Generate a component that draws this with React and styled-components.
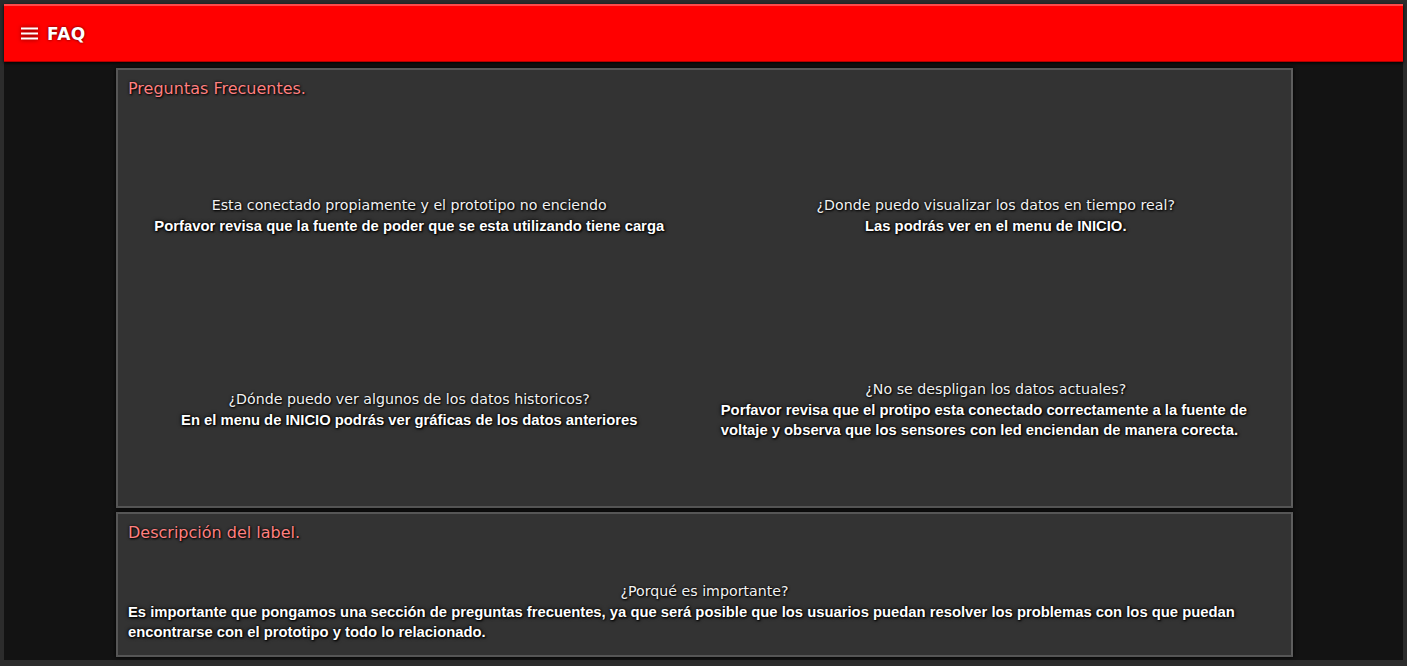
import styled, { createGlobalStyle } from "styled-components";

const GlobalStyle = createGlobalStyle`
  html, body {
    margin: 0;
    padding: 0;
    background: #2c2c2c;
  }
  #root {
    padding: 4px 4px 6px 4px;
    font-family: "Liberation Sans", Arial, sans-serif;
  }
`;

const Frame = styled.div`
  height: 656px;
  display: flex;
  flex-direction: column;
`;

const Header = styled.header`
  height: 58px;
  flex-shrink: 0;
  background: #ff0000;
  border-top: 2px solid #ff4a4a;
  border-bottom: 1px solid #b30000;
  box-sizing: border-box;
  display: flex;
  align-items: center;
  gap: 9px;
  padding: 0 0 0 17px;
  box-shadow: 0 1px 3px #000;
  position: relative;
  z-index: 1;
`;

const MenuIcon = styled.svg`
  width: 17px;
  height: 13px;
  filter: drop-shadow(0 0 2px rgba(0, 0, 0, 0.6));
`;

const HeaderTitle = styled.h1`
  margin: 0;
  color: #fff;
  font-family: "DejaVu Sans", sans-serif;
  font-size: 17px;
  font-weight: bold;
  letter-spacing: 0.5px;
  text-shadow: 0 0 3px rgba(0, 0, 0, 0.7);
`;

const Main = styled.main`
  flex: 1;
  background: #131313;
  display: flex;
  flex-direction: column;
  align-items: center;
  gap: 4px;
  padding: 6px 0 3px 2px;
  box-sizing: border-box;
`;

const Card = styled.section`
  width: 1177px;
  height: ${(p) => p.$h}px;
  box-sizing: border-box;
  background: #333333;
  border: 2px solid #565656;
  border-right-color: #5e5e5e;
  box-shadow: 0 0 4px #000;
  display: flex;
  flex-direction: column;
`;

const CardTitle = styled.h2`
  margin: 0;
  padding: 9px 10px 0;
  height: 48px;
  box-sizing: border-box;
  color: #ff8080;
  font-family: "DejaVu Sans", sans-serif;
  font-size: 16px;
  font-weight: normal;
  text-shadow: 1px 1px 2px #000, 0 0 3px #000;
`;

const Grid = styled.div`
  flex: 1;
  display: grid;
  grid-template-columns: 1fr 1fr;
  grid-template-rows: 195px 1fr;
`;

const Cell = styled.div`
  display: flex;
  flex-direction: column;
  justify-content: center;
  align-items: center;
  padding: 0 12px 0 8px;
  text-align: center;
`;

const Question = styled.p`
  margin: 0;
  color: #f2f2f2;
  font-family: "DejaVu Sans", sans-serif;
  font-size: 14.2px;
  line-height: 21px;
  text-shadow: 1px 1px 2px #000, 0 0 3px #000;
`;

const Answer = styled.p`
  margin: 0;
  max-width: ${(p) => p.$max || "none"};
  color: #fff;
  font-size: 14.8px;
  font-weight: bold;
  line-height: 20px;
  text-align: ${(p) => p.$align || "center"};
  text-shadow: 1px 1px 2px #000, 0 0 4px #000, 0 0 2px #000;
`;

const Description = styled.div`
  padding: 19px 10px 0;
  display: flex;
  flex-direction: column;
  align-items: center;
`;

const faqs = [
  {
    q: "Esta conectado propiamente y el prototipo no enciendo",
    a: "Porfavor revisa que la fuente de poder que se esta utilizando tiene carga",
  },
  {
    q: "¿Donde puedo visualizar los datos en tiempo real?",
    a: "Las podrás ver en el menu de INICIO.",
  },
  {
    q: "¿Dónde puedo ver algunos de los datos historicos?",
    a: "En el menu de INICIO podrás ver gráficas de los datos anteriores",
  },
  {
    q: "¿No se despligan los datos actuales?",
    a: "Porfavor revisa que el protipo esta conectado correctamente a la fuente de voltaje y observa que los sensores con led enciendan de manera corecta.",
  },
];

export default function App() {
  return (
    <>
      <GlobalStyle />
      <Frame>
        <Header>
          <MenuIcon viewBox="0 0 17 13">
            <rect x="0" y="0.5" width="17" height="2" fill="#fff" />
            <rect x="0" y="5.5" width="17" height="2" fill="#fff" />
            <rect x="0" y="10.5" width="17" height="2" fill="#fff" />
          </MenuIcon>
          <HeaderTitle>FAQ</HeaderTitle>
        </Header>
        <Main>
          <Card $h={440}>
            <CardTitle>Preguntas Frecuentes.</CardTitle>
            <Grid>
              {faqs.map((f) => (
                <Cell key={f.q}>
                  <Question>{f.q}</Question>
                  <Answer $align="left" $max="550px">
                    {f.a}
                  </Answer>
                </Cell>
              ))}
            </Grid>
          </Card>
          <Card $h={145}>
            <CardTitle>Descripción del label.</CardTitle>
            <Description>
              <Question>¿Porqué es importante?</Question>
              <Answer $align="left">
                Es importante que pongamos una sección de preguntas frecuentes, ya que será posible que los usuarios puedan resolver los problemas con los que puedan encontrarse con el prototipo y todo lo relacionado.
              </Answer>
            </Description>
          </Card>
        </Main>
      </Frame>
    </>
  );
}
